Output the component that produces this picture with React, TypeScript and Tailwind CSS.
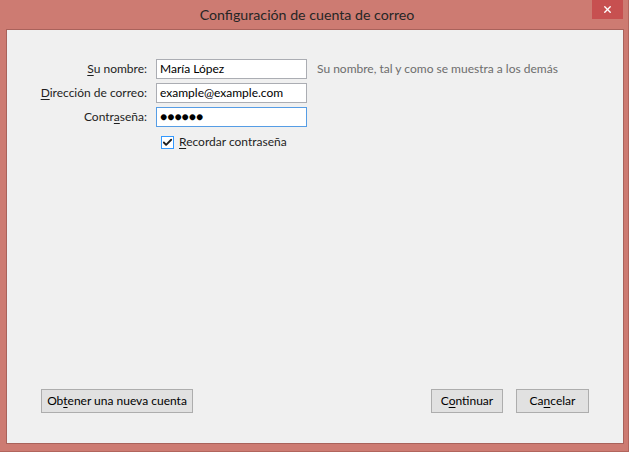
import { Check, X } from "lucide-react";

const font = { fontFamily: 'Lato, "Noto Sans", sans-serif' };

function Field({ label, value, focused }: { label: [string, string, string]; value: string; focused?: boolean }) {
  return (
    <>
      <label className="text-right text-[12px] leading-[20px] text-[#1e1e1e] whitespace-nowrap">
        {label[0]}
        <span className="underline underline-offset-2">{label[1]}</span>
        {label[2]}
      </label>
      <div
        className={`h-[20px] w-[151px] bg-white border px-[3px] text-[12px] leading-[18px] text-black ${
          focused ? "border-[#569de5]" : "border-[#abadb3]"
        }`}
      >
        {value}
      </div>
    </>
  );
}

export default function App() {
  return (
    <div className="w-[629px] h-[452px] bg-[#cd7b72] flex flex-col border-r border-b border-[#b2655d]" style={font}>
      <div className="relative h-[29px] flex items-center justify-center pr-[14px]">
        <span className="text-[14.2px] text-[#262626] leading-none mt-[1px]">Configuración de cuenta de correo</span>
        <div className="absolute right-[5px] top-0 w-[31px] h-[19px] bg-[#c75050] flex items-center justify-center">
          <X className="w-[11px] h-[11px] text-white" strokeWidth={3} />
        </div>
      </div>
      <div className="ml-[6px] mr-[4px] mb-[7px] flex-1 bg-[#f0f0f0] border border-[#a9625b] flex flex-col">
        <div className="pt-[29px] grid grid-cols-[140px_151px_auto] gap-x-[9px] gap-y-[4px] items-center">
          <Field label={["", "S", "u nombre:"]} value="María López" />
          <span className="text-[12px] text-[#6d6d6d] ml-[1px] whitespace-nowrap">Su nombre, tal y como se muestra a los demás</span>
          <Field label={["", "D", "irección de correo:"]} value="example@example.com" />
          <span />
          <Field label={["Contr", "a", "seña:"]} value="●●●●●●" focused />
          <span />
          <span />
          <div className="flex items-center gap-[5px] mt-[2px] ml-[5px]">
            <div className="w-[13px] h-[13px] border border-[#3399ff] bg-white flex items-center justify-center">
              <Check className="w-[11px] h-[11px] text-[#1f1f1f]" strokeWidth={4} />
            </div>
            <span className="text-[12px] text-[#1e1e1e] whitespace-nowrap">
              <span className="underline underline-offset-2">R</span>ecordar contraseña
            </span>
          </div>
          <span />
        </div>
        <div className="flex-1" />
        <div className="flex items-center px-[34px] pb-[30px]">
          <button className="h-[24px] w-[152px] bg-[#e1e1e1] border border-[#adadad] text-[12px] text-black whitespace-nowrap">
            Ob<span className="underline underline-offset-2">t</span>ener una nueva cuenta
          </button>
          <div className="flex-1" />
          <button className="h-[24px] w-[72px] bg-[#e1e1e1] border border-[#adadad] text-[12px] text-black whitespace-nowrap">
            C<span className="underline underline-offset-2">o</span>ntinuar
          </button>
          <button className="ml-[13px] h-[24px] w-[73px] bg-[#e1e1e1] border border-[#adadad] text-[12px] text-black whitespace-nowrap">
            Ca<span className="underline underline-offset-2">n</span>celar
          </button>
        </div>
      </div>
    </div>
  );
}
